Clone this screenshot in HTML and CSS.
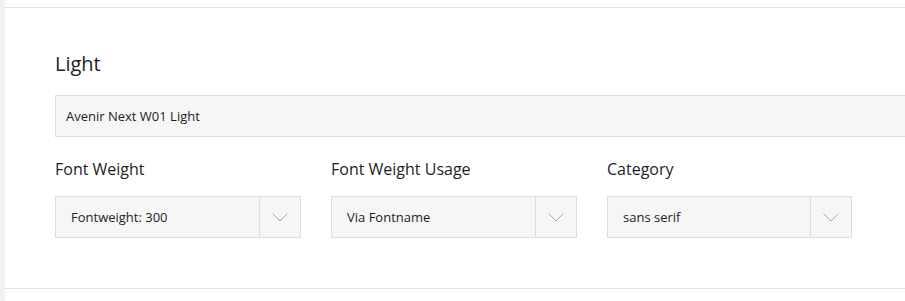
FILE: index.html
```html
<!DOCTYPE html>
<html>
<head>
    <title>Font Variant</title>
    <link rel="stylesheet" href="styles.css">
</head>
<body>
    <div class="page">
        <div class="top-gap"></div>
        <section class="variant">
            <h2 class="variant-title">Light</h2>
            <div class="text-field">Avenir Next W01 Light</div>
            <div class="fields">
                <div class="field">
                    <label class="field-label">Font Weight</label>
                    <div class="select">
                        <span class="select-value">Fontweight: 300</span>
                        <span class="select-arrow">
                            <svg width="16" height="9" viewBox="0 0 16 9"><path d="M0.5 0.5 L8 8 L15.5 0.5" fill="none" stroke="#a6a6a6" stroke-width="1"/></svg>
                        </span>
                    </div>
                </div>
                <div class="field">
                    <label class="field-label">Font Weight Usage</label>
                    <div class="select">
                        <span class="select-value">Via Fontname</span>
                        <span class="select-arrow">
                            <svg width="16" height="9" viewBox="0 0 16 9"><path d="M0.5 0.5 L8 8 L15.5 0.5" fill="none" stroke="#a6a6a6" stroke-width="1"/></svg>
                        </span>
                    </div>
                </div>
                <div class="field">
                    <label class="field-label">Category</label>
                    <div class="select">
                        <span class="select-value">sans serif</span>
                        <span class="select-arrow">
                            <svg width="16" height="9" viewBox="0 0 16 9"><path d="M0.5 0.5 L8 8 L15.5 0.5" fill="none" stroke="#a6a6a6" stroke-width="1"/></svg>
                        </span>
                    </div>
                </div>
            </div>
        </section>
    </div>
</body>
</html>
```

FILE: styles.css
```css
html, body {
    margin: 0;
    padding: 0;
    background-color: #fff;
    color: #1e1e1e;
    font-family: "Open Sans", Arial, sans-serif;
}

.page {
    border-left: 5px solid #f2f2f2;
    min-height: 301px;
    overflow: hidden;
}

.top-gap {
    height: 7px;
}

.variant {
    border-top: 1px solid #e1e1e1;
    border-bottom: 1px solid #e1e1e1;
    padding: 42px 0 50px 50px;
    overflow: hidden;
}

.variant-title {
    margin: 0 0 17px;
    font-size: 20px;
    font-weight: 400;
    line-height: 28px;
}

.text-field {
    box-sizing: border-box;
    height: 42px;
    margin-right: -60px;
    padding: 0 10px;
    border: 1px solid #dedede;
    background-color: #f6f6f6;
    font-size: 13px;
    line-height: 40px;
}

.fields {
    display: grid;
    grid-template-columns: 246px 246px 245px;
    column-gap: 30px;
    margin-top: 20px;
}

.field-label {
    display: block;
    font-size: 16px;
    line-height: 24px;
    margin-bottom: 15px;
}

.select {
    box-sizing: border-box;
    display: flex;
    height: 42px;
    border: 1px solid #dedede;
    background-color: #f6f6f6;
}

.select-value {
    flex: 1;
    padding: 0 15px;
    font-size: 13px;
    line-height: 40px;
}

.select-arrow {
    width: 40px;
    border-left: 1px solid #dedede;
    display: flex;
    align-items: center;
    justify-content: center;
}
```
